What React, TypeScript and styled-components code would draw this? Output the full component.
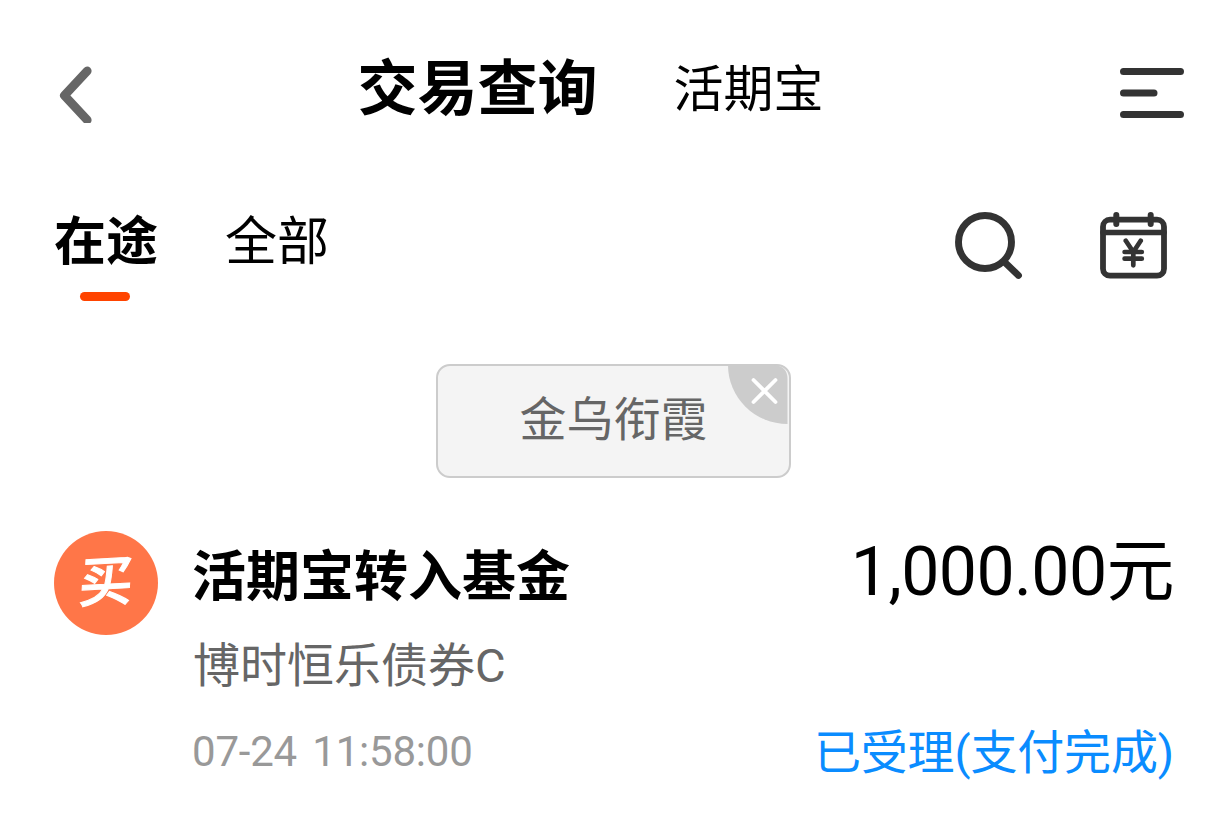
import { FC } from 'react';
import styled, { createGlobalStyle } from 'styled-components';

type Trade = {
  id: number;
  badge: string;
  title: string;
  amount: string;
  product: string;
  time: string;
  status: string;
};

const trades: Trade[] = [
  {
    id: 1,
    badge: '买',
    title: '活期宝转入基金',
    amount: '1,000.00元',
    product: '博时恒乐债券C',
    time: '07-24 11:58:00',
    status: '已受理(支付完成)',
  },
];

const BackIcon: FC = () => (
  <svg width="40" height="60" viewBox="0 0 40 60" fill="none">
    <path d="M32.2 8 9.4 32.5l22.8 24.5" stroke="#666" strokeWidth="8.8" strokeLinecap="round" strokeLinejoin="round" />
  </svg>
);

const MenuIcon: FC = () => (
  <svg width="64" height="52" viewBox="0 0 64 52" fill="none">
    <path d="M3.5 4.5h57M3.5 26h30.5M3.5 47.5h57" stroke="#333" strokeWidth="7" strokeLinecap="round" />
  </svg>
);

const SearchIcon: FC = () => (
  <svg width="68" height="68" viewBox="0 0 68 68" fill="none" stroke="#333">
    <circle cx="30" cy="30" r="26.5" strokeWidth="6.9" />
    <path d="M50 50.5 63.5 63.5" strokeWidth="6.8" strokeLinecap="round" />
  </svg>
);

const CalendarIcon: FC = () => (
  <svg width="68" height="68" viewBox="0 0 68 68" fill="none" stroke="#333" strokeLinecap="round">
    <rect x="3" y="7.7" width="61" height="56" rx="7" strokeWidth="5.8" />
    <path d="M3 20.5h61" strokeWidth="5.6" />
    <path d="M16.3 3v9M50.7 3v9" strokeWidth="6" />
    <path
      d="M25.8 28.8 33.3 40 40.7 28.8M24.6 40h17.2M24.6 46.7h17.2M33.3 40v13.3"
      strokeWidth="4.7"
      strokeLinejoin="round"
    />
  </svg>
);

const CloseIcon: FC = () => (
  <svg width="60" height="60" viewBox="0 0 60 60" fill="none">
    <path d="M0 0H46Q59.5 1 59.5 14V59A59.5 59 0 0 1 0 0Z" fill="#ccc" />
    <path d="M25.5 15 47.5 37M47.5 15 25.5 37" stroke="#fff" strokeWidth="3.8" strokeLinecap="round" />
  </svg>
);

const TradeCard: FC<{ trade: Trade }> = ({ trade }) => (
  <TradeItem>
    <TradeBadge>
      <BadgeText>{trade.badge}</BadgeText>
    </TradeBadge>
    <TradeBody>
      <TradeRow $height={82}>
        <TradeTitle>{trade.title}</TradeTitle>
        <TradeAmount>{trade.amount}</TradeAmount>
      </TradeRow>
      <TradeRow $height={96}>
        <TradeProduct>{trade.product}</TradeProduct>
      </TradeRow>
      <TradeRow $height={78}>
        <TradeTime>{trade.time}</TradeTime>
        <TradeStatus>{trade.status}</TradeStatus>
      </TradeRow>
    </TradeBody>
  </TradeItem>
);

const App: FC = () => (
  <>
    <GlobalStyle />
    <Page>
      <Header>
        <IconButton aria-label="返回">
          <BackIcon />
        </IconButton>
        <HeaderTabs>
          <HeaderTitle>交易查询</HeaderTitle>
          <HeaderLink>活期宝</HeaderLink>
        </HeaderTabs>
        <IconButton aria-label="菜单">
          <MenuIcon />
        </IconButton>
      </Header>

      <FilterBar>
        <FilterTabs>
          <FilterTab $active>在途</FilterTab>
          <FilterTab>全部</FilterTab>
        </FilterTabs>
        <FilterActions>
          <IconButton aria-label="搜索">
            <SearchIcon />
          </IconButton>
          <IconButton aria-label="日期">
            <CalendarIcon />
          </IconButton>
        </FilterActions>
      </FilterBar>

      <TagRow>
        <Tag>
          金乌衔霞
          <TagClose aria-label="关闭">
            <CloseIcon />
          </TagClose>
        </Tag>
      </TagRow>

      <TradeList>
        {trades.map(trade => (
          <TradeCard key={trade.id} trade={trade} />
        ))}
      </TradeList>
    </Page>
  </>
);

const GlobalStyle = createGlobalStyle`
  * {
    box-sizing: border-box;
  }

  body {
    margin: 0;
    background: #fff;
    color: #000;
    font-family: Roboto, "Noto Sans CJK SC", sans-serif;
  }
`;

const Page = styled.main`
  width: 1228px;
  height: 839px;
  overflow: hidden;
`;

const IconButton = styled.button`
  display: flex;
  padding: 0;
  border: 0;
  background: none;
  color: inherit;
`;

const Header = styled.header`
  display: flex;
  align-items: center;
  justify-content: space-between;
  height: 186px;
  padding: 0 44px 0 55px;
`;

const HeaderTabs = styled.nav`
  display: flex;
  align-items: center;
  gap: 76px;
  margin: 0 34px 7px 0;
  line-height: 80px;
  white-space: nowrap;
`;

const HeaderTitle = styled.h1`
  margin: 0;
  font-size: 60px;
  font-weight: 700;
`;

const HeaderLink = styled.span`
  font-size: 50px;
`;

const FilterBar = styled.div`
  display: flex;
  justify-content: space-between;
  height: 178px;
  padding: 22px 60px 0 54px;
`;

const FilterTabs = styled.div`
  display: flex;
  gap: 67px;
`;

const FilterTab = styled.div<{ $active?: boolean }>`
  display: flex;
  flex-direction: column;
  align-items: center;
  font-size: 52px;
  line-height: 70px;
  font-weight: ${({ $active }) => ($active ? 700 : 400)};

  &::after {
    content: '';
    display: ${({ $active }) => ($active ? 'block' : 'none')};
    width: 50px;
    height: 9px;
    margin: 14px 2px 0 0;
    border-radius: 5px;
    background: #ff4400;
  }
`;

const FilterActions = styled.div`
  display: flex;
  align-items: flex-start;
  gap: 77px;
  padding-top: 4px;
`;

const TagRow = styled.div`
  display: flex;
  justify-content: center;
  height: 114px;
  padding-right: 1px;
`;

const Tag = styled.div`
  position: relative;
  width: 355px;
  height: 114px;
  border: 2px solid #ccc;
  border-radius: 14px;
  background: #f4f4f4;
  color: #666;
  font-size: 47px;
  line-height: 108px;
  text-align: center;
`;

const TagClose = styled(IconButton)`
  position: absolute;
  top: -1px;
  right: 1px;
`;

const TradeList = styled.section`
  padding: 53px 54px 0 54px;
`;

const TradeItem = styled.article`
  display: flex;
  gap: 34px;
`;

const TradeBadge = styled.div`
  display: flex;
  align-items: center;
  justify-content: center;
  flex: none;
  width: 104px;
  height: 104px;
  border-radius: 50%;
  background: #ff7648;
`;

const BadgeText = styled.span`
  color: #fff;
  font-size: 54px;
  font-weight: 500;
  line-height: 1;
  -webkit-text-stroke: 1px #fff;
  transform: rotate(-3deg) skewX(-6deg);
`;

const TradeBody = styled.div`
  flex: 1;
  min-width: 0;
`;

const TradeRow = styled.div<{ $height: number }>`
  display: flex;
  align-items: center;
  justify-content: space-between;
  height: ${({ $height }) => $height}px;
  white-space: nowrap;
`;

const TradeTitle = styled.h2`
  margin: 0;
  font-size: 54px;
  font-weight: 700;
`;

const TradeAmount = styled.span`
  padding-bottom: 14px;
  font-size: 68px;
  letter-spacing: -0.6px;
`;

const TradeProduct = styled.span`
  padding-left: 1px;
  color: #666;
  font-size: 47px;
`;

const TradeTime = styled.span`
  padding-top: 7px;
  color: #999;
  font-size: 42px;
  letter-spacing: -0.2px;
  word-spacing: 5px;
`;

const TradeStatus = styled.span`
  color: #0a8cff;
  font-size: 47px;
  letter-spacing: -0.15px;
`;

export default App;
